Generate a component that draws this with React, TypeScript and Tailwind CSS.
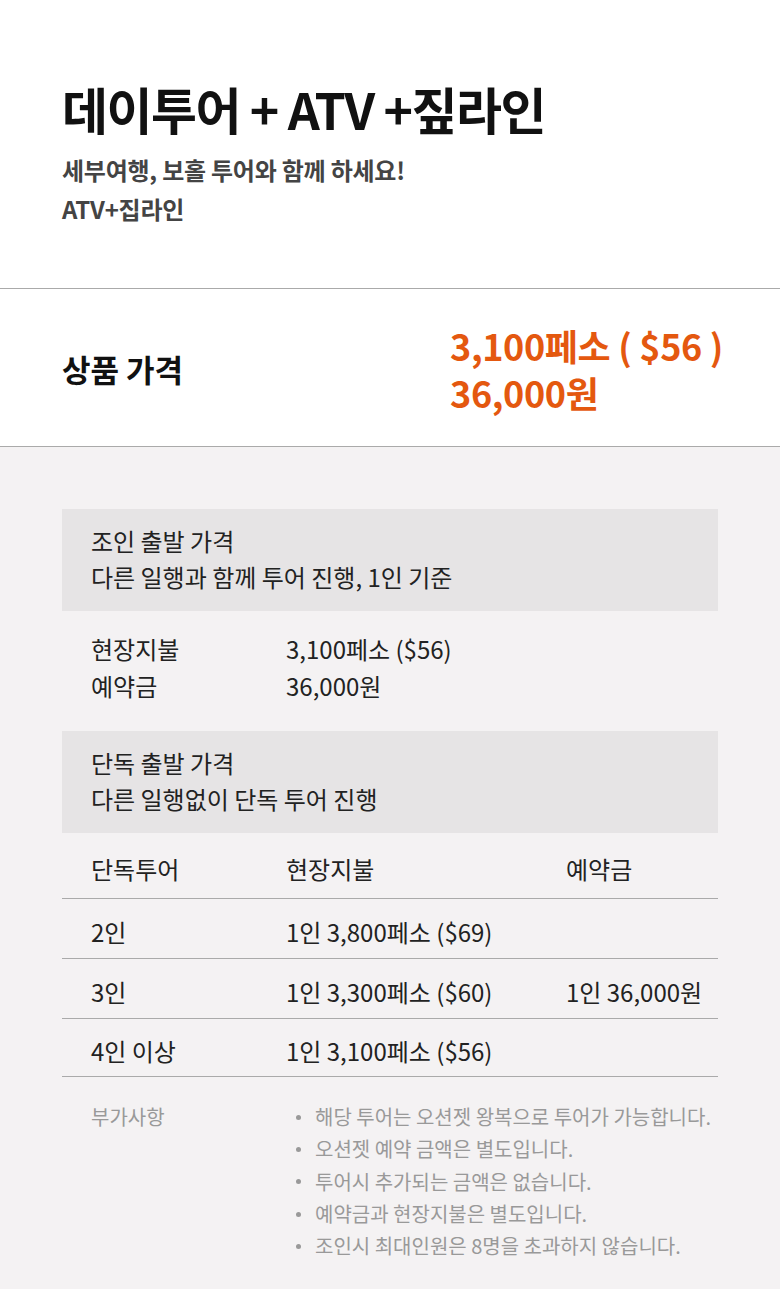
import React from "react";

const FONT = "font-['Noto_Sans_CJK_KR','Noto_Sans',sans-serif]";

const soloRows = [
  { people: "2인", onsite: "1인 3,800페소 ($69)", deposit: "", h: "h-[60px]" },
  { people: "3인", onsite: "1인 3,300페소 ($60)", deposit: "1인 36,000원", h: "h-[60px]" },
  { people: "4인 이상", onsite: "1인 3,100페소 ($56)", deposit: "", h: "h-[58px]" },
];

const notes = [
  "해당 투어는 오션젯 왕복으로 투어가 가능합니다.",
  "오션젯 예약 금액은 별도입니다.",
  "투어시 추가되는 금액은 없습니다.",
  "예약금과 현장지불은 별도입니다.",
  "조인시 최대인원은 8명을 초과하지 않습니다.",
];

function InfoBox({ title, desc }: { title: string; desc: string }) {
  return (
    <div className="bg-[#e6e4e5] pl-[29px] pt-[14px] pb-[16px] text-[24px] leading-[36px] text-[#222]">
      <div>{title}</div>
      <div>{desc}</div>
    </div>
  );
}

export default function App() {
  return (
    <div className={`${FONT} w-[780px] bg-white`}>
      {/* Header */}
      <div className="px-[62px] pt-[78px] pb-[60px]">
        <h1 className="text-[50px] font-bold leading-[60px] tracking-[-0.03em] text-[#111]">
          데이투어 + ATV +짚라인
        </h1>
        <div className="mt-[12px] text-[24px] font-bold leading-[39px] tracking-[-0.01em] text-[#444]">
          <div>세부여행, 보홀 투어와 함께 하세요!</div>
          <div>ATV+집라인</div>
        </div>
      </div>

      {/* Price */}
      <div className="flex items-center border-y border-[#aaa] pl-[62px] pt-[33px] pb-[30px]">
        <div className="w-[388px] text-[31px] font-bold text-[#111]">상품 가격</div>
        <div className="text-[36px] font-bold leading-[47px] tracking-[-0.01em] text-[#e4580f]">
          <div>3,100페소 ( $56 )</div>
          <div>36,000원</div>
        </div>
      </div>

      {/* Details */}
      <div className="bg-[#f4f2f3] px-[62px] pt-[62px] pb-[27px] text-[#222]">
        <InfoBox title="조인 출발 가격" desc="다른 일행과 함께 투어 진행, 1인 기준" />

        <div className="pl-[29px] pt-[19px] pb-[27px] text-[24px] leading-[37px]">
          <div className="flex">
            <div className="w-[195px]">현장지불</div>
            <div>3,100페소 ($56)</div>
          </div>
          <div className="flex">
            <div className="w-[195px]">예약금</div>
            <div>36,000원</div>
          </div>
        </div>

        <InfoBox title="단독 출발 가격" desc="다른 일행없이 단독 투어 진행" />

        <div className="text-[24px] leading-[36px]">
          <div className="flex h-[66px] items-center border-b border-[#aaa] pl-[29px] pt-[7px]">
            <div className="w-[195px]">단독투어</div>
            <div className="w-[280px]">현장지불</div>
            <div>예약금</div>
          </div>
          {soloRows.map((r) => (
            <div
              key={r.people}
              className={`flex ${r.h} items-center border-b border-[#aaa] pl-[29px] pt-[6px]`}
            >
              <div className="w-[195px]">{r.people}</div>
              <div className="w-[280px]">{r.onsite}</div>
              <div>{r.deposit}</div>
            </div>
          ))}
        </div>

        <div className="flex pl-[29px] pt-[24px] text-[20px] leading-[32.3px] text-[#999]">
          <div className="w-[195px]">부가사항</div>
          <ul>
            {notes.map((n) => (
              <li key={n} className="flex items-center">
                <span className="mr-[14px] ml-[10px] inline-block h-[5px] w-[5px] rounded-full bg-[#999]" />
                {n}
              </li>
            ))}
          </ul>
        </div>
      </div>
    </div>
  );
}
